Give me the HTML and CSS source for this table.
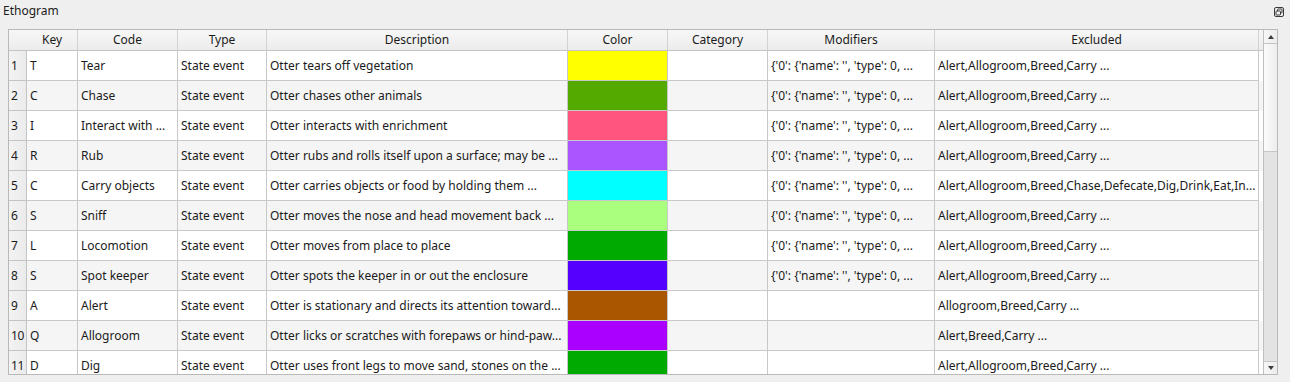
FILE: index.html
```html
<!DOCTYPE html>
<html>
<head>
<meta charset="utf-8">
<link rel="stylesheet" href="styles.css">
</head>
<body>
<div class="dock">
  <div class="titlebar">
    <span class="title">Ethogram</span>
    <svg class="float-icon" width="10" height="10" viewBox="0 0 10 10">
      <rect x="0.5" y="0.5" width="9" height="9" rx="1.5" fill="none" stroke="#3a3a3a"/>
      <rect x="3.5" y="2" width="4.5" height="4" rx="0.8" fill="none" stroke="#3a3a3a"/>
      <rect x="2" y="4" width="4.5" height="4" rx="0.8" fill="#efefef" stroke="#3a3a3a"/>
    </svg>
  </div>
  <div class="frame">
    <div class="view">
      <div class="hrow">
        <div class="corner"></div>
        <div class="hcell c-key">Key</div>
        <div class="hcell c-code">Code</div>
        <div class="hcell c-type">Type</div>
        <div class="hcell c-desc">Description</div>
        <div class="hcell c-color">Color</div>
        <div class="hcell c-cat">Category</div>
        <div class="hcell c-mod">Modifiers</div>
        <div class="hcell c-exc">Excluded</div>
        <div class="hfill"></div>
      </div>
      <div class="body">
        <div class="row">
          <div class="vh">1</div><div class="cell c-key">T</div><div class="cell c-code">Tear</div><div class="cell c-type">State event</div><div class="cell c-desc">Otter tears off vegetation</div><div class="cell c-color" style="background:#ffff00"></div><div class="cell c-cat"></div><div class="cell c-mod">{'0': {'name': '', 'type': 0, ...</div><div class="cell c-exc">Alert,Allogroom,Breed,Carry ...</div>
        </div>
        <div class="row alt">
          <div class="vh">2</div><div class="cell c-key">C</div><div class="cell c-code">Chase</div><div class="cell c-type">State event</div><div class="cell c-desc">Otter chases other animals</div><div class="cell c-color" style="background:#55aa00"></div><div class="cell c-cat"></div><div class="cell c-mod">{'0': {'name': '', 'type': 0, ...</div><div class="cell c-exc">Alert,Allogroom,Breed,Carry ...</div>
        </div>
        <div class="row">
          <div class="vh">3</div><div class="cell c-key">I</div><div class="cell c-code">Interact with ...</div><div class="cell c-type">State event</div><div class="cell c-desc">Otter interacts with enrichment</div><div class="cell c-color" style="background:#ff557f"></div><div class="cell c-cat"></div><div class="cell c-mod">{'0': {'name': '', 'type': 0, ...</div><div class="cell c-exc">Alert,Allogroom,Breed,Carry ...</div>
        </div>
        <div class="row alt">
          <div class="vh">4</div><div class="cell c-key">R</div><div class="cell c-code">Rub</div><div class="cell c-type">State event</div><div class="cell c-desc">Otter rubs and rolls itself upon a surface; may be ...</div><div class="cell c-color" style="background:#aa55ff"></div><div class="cell c-cat"></div><div class="cell c-mod">{'0': {'name': '', 'type': 0, ...</div><div class="cell c-exc">Alert,Allogroom,Breed,Carry ...</div>
        </div>
        <div class="row">
          <div class="vh">5</div><div class="cell c-key">C</div><div class="cell c-code">Carry objects</div><div class="cell c-type">State event</div><div class="cell c-desc">Otter carries objects or food by holding them ...</div><div class="cell c-color" style="background:#00ffff"></div><div class="cell c-cat"></div><div class="cell c-mod">{'0': {'name': '', 'type': 0, ...</div><div class="cell c-exc">Alert,Allogroom,Breed,Chase,Defecate,Dig,Drink,Eat,In...</div>
        </div>
        <div class="row alt">
          <div class="vh">6</div><div class="cell c-key">S</div><div class="cell c-code">Sniff</div><div class="cell c-type">State event</div><div class="cell c-desc">Otter moves the nose and head movement back ...</div><div class="cell c-color" style="background:#aaff7f"></div><div class="cell c-cat"></div><div class="cell c-mod">{'0': {'name': '', 'type': 0, ...</div><div class="cell c-exc">Alert,Allogroom,Breed,Carry ...</div>
        </div>
        <div class="row">
          <div class="vh">7</div><div class="cell c-key">L</div><div class="cell c-code">Locomotion</div><div class="cell c-type">State event</div><div class="cell c-desc">Otter moves from place to place</div><div class="cell c-color" style="background:#00aa00"></div><div class="cell c-cat"></div><div class="cell c-mod">{'0': {'name': '', 'type': 0, ...</div><div class="cell c-exc">Alert,Allogroom,Breed,Carry ...</div>
        </div>
        <div class="row alt">
          <div class="vh">8</div><div class="cell c-key">S</div><div class="cell c-code">Spot keeper</div><div class="cell c-type">State event</div><div class="cell c-desc">Otter spots the keeper in or out the enclosure</div><div class="cell c-color" style="background:#5500ff"></div><div class="cell c-cat"></div><div class="cell c-mod">{'0': {'name': '', 'type': 0, ...</div><div class="cell c-exc">Alert,Allogroom,Breed,Carry ...</div>
        </div>
        <div class="row">
          <div class="vh">9</div><div class="cell c-key">A</div><div class="cell c-code">Alert</div><div class="cell c-type">State event</div><div class="cell c-desc">Otter is stationary and directs its attention toward...</div><div class="cell c-color" style="background:#aa5500"></div><div class="cell c-cat"></div><div class="cell c-mod"></div><div class="cell c-exc">Allogroom,Breed,Carry ...</div>
        </div>
        <div class="row alt">
          <div class="vh">10</div><div class="cell c-key">Q</div><div class="cell c-code">Allogroom</div><div class="cell c-type">State event</div><div class="cell c-desc">Otter licks or scratches with forepaws or hind-paw...</div><div class="cell c-color" style="background:#aa00ff"></div><div class="cell c-cat"></div><div class="cell c-mod"></div><div class="cell c-exc">Alert,Breed,Carry ...</div>
        </div>
        <div class="row">
          <div class="vh">11</div><div class="cell c-key">D</div><div class="cell c-code">Dig</div><div class="cell c-type">State event</div><div class="cell c-desc">Otter uses front legs to move sand, stones on the ...</div><div class="cell c-color" style="background:#00aa00"></div><div class="cell c-cat"></div><div class="cell c-mod"></div><div class="cell c-exc">Alert,Allogroom,Breed,Carry ...</div>
        </div>
      </div>
    </div>
    <div class="scrollbar">
      <div class="sb-btn"><span class="tri-up"></span></div>
      <div class="sb-handle"></div>
      <div class="sb-track"></div>
      <div class="sb-btn sb-down"><span class="tri-down"></span></div>
    </div>
  </div>
</div>
</body>
</html>
```
FILE: styles.css
```css
* { box-sizing: border-box; }
html, body {
  margin: 0;
  padding: 0;
  background: #efefef;
}
body {
  font-family: "Noto Sans", "Open Sans", sans-serif;
  font-size: 12px;
  color: #1b1b1b;
  width: 1290px;
  height: 382px;
  overflow: hidden;
}
.dock {
  display: flex;
  flex-direction: column;
}
.titlebar {
  height: 29px;
  display: flex;
  align-items: flex-start;
  justify-content: space-between;
  padding: 2px 6px 0 3px;
}
.title {
  line-height: 17px;
}
.float-icon {
  margin-top: 5px;
}
.frame {
  margin-left: 8px;
  width: 1270px;
  height: 346px;
  border: 1px solid #b9b9b9;
  display: flex;
  background: #fbfbfb;
}
.view {
  flex: 1;
  display: flex;
  flex-direction: column;
  overflow: hidden;
}
.hrow {
  display: flex;
  height: 21px;
  flex: none;
  border-bottom: 1px solid #c4c4c4;
  background: linear-gradient(#f7f7f7, #ececec);
}
.corner { width: 18px; flex: none; }
.hcell {
  flex: none;
  text-align: center;
  line-height: 20px;
  border-right: 1px solid #d2d2d2;
  white-space: nowrap;
  overflow: hidden;
}
.hfill { flex: 1; }
.c-key { width: 51px; }
.c-code { width: 100px; }
.c-type { width: 89px; }
.c-desc { width: 301px; }
.c-color { width: 100px; }
.c-cat { width: 100px; }
.c-mod { width: 167px; }
.c-exc { width: 324px; }
.body {
  flex: 1;
  overflow: hidden;
}
.row {
  display: flex;
  height: 30px;
  background: #ffffff;
}
.row.alt { background: #f5f5f5; }
.vh {
  width: 18px;
  flex: none;
  padding-left: 2px;
  line-height: 29px;
  border-right: 1px solid #c4c4c4;
  border-bottom: 1px solid #c4c4c4;
  background: linear-gradient(90deg, #f3f3f3, #ebebeb);
  white-space: nowrap;
  letter-spacing: -0.3px;
}
.cell {
  flex: none;
  padding-left: 3px;
  line-height: 29px;
  border-right: 1px solid #c8c8c8;
  border-bottom: 1px solid #c8c8c8;
  white-space: nowrap;
  overflow: hidden;
}
.scrollbar {
  width: 14px;
  flex: none;
  border-left: 1px solid #c0c0c0;
  display: flex;
  flex-direction: column;
}
.sb-btn {
  height: 14px;
  flex: none;
  display: flex;
  align-items: center;
  justify-content: center;
  background: linear-gradient(90deg, #f7f7f7, #ececec);
  border-bottom: 1px solid #c6c6c6;
}
.sb-down {
  border-bottom: none;
  border-top: 1px solid #c6c6c6;
  height: 13px;
}
.tri-up {
  width: 0; height: 0;
  border-left: 3.5px solid transparent;
  border-right: 3.5px solid transparent;
  border-bottom: 4px solid #3c3c3c;
}
.tri-down {
  width: 0; height: 0;
  border-left: 3.5px solid transparent;
  border-right: 3.5px solid transparent;
  border-top: 4px solid #3c3c3c;
}
.sb-handle {
  height: 108px;
  flex: none;
  background: linear-gradient(90deg, #fbfbfb, #ededed);
  border-bottom: 1px solid #c6c6c6;
}
.sb-track {
  flex: 1;
  background: #e3e3e3;
}
```
